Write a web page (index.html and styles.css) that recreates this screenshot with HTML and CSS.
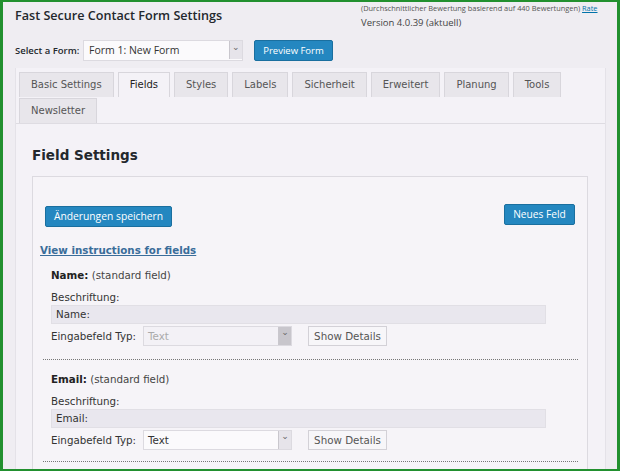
FILE: index.html
```html
<!DOCTYPE HTML>
<html>
<head>
<meta charset="utf-8" />
<title>Fast Secure Contact Form Settings</title>
<link rel="stylesheet" href="styles.css">
</head>
<body>
<div class="frame">
	<div class="head">
		<h1 class="title">Fast Secure Contact Form Settings</h1>
		<div class="rating">
			<p class="votes">(Durchschnittlicher Bewertung basierend auf 440 Bewertungen) <a href="#">Rate</a></p>
			<p class="version">Version 4.0.39 (aktuell)</p>
		</div>
	</div>

	<div class="pick">
		<label>Select a Form:</label>
		<div class="select wide"><span>Form 1: New Form</span><i>&#8964;</i></div>
		<a class="btn" href="#">Preview Form</a>
	</div>

	<div class="panel">
		<ul class="tabs">
			<li>Basic Settings</li>
			<li class="on">Fields</li>
			<li>Styles</li>
			<li>Labels</li>
			<li>Sicherheit</li>
			<li>Erweitert</li>
			<li>Planung</li>
			<li>Tools</li>
			<li>Newsletter</li>
		</ul>
		<div class="body">
			<h2>Field Settings</h2>
			<div class="box">
				<div class="actions">
					<a class="btn save" href="#">Änderungen speichern</a>
					<a class="btn add" href="#">Neues Feld</a>
				</div>
				<a class="help" href="#">View instructions for fields</a>

				<div class="field">
					<p class="name"><b>Name:</b> (standard field)</p>
					<p class="lbl">Beschriftung:</p>
					<div class="input">Name:</div>
					<div class="type">
						<span>Eingabefeld Typ:</span>
						<div class="select off"><span>Text</span><i>&#8964;</i></div>
						<a class="plain" href="#">Show Details</a>
					</div>
				</div>

				<div class="field">
					<p class="name"><b>Email:</b> (standard field)</p>
					<p class="lbl">Beschriftung:</p>
					<div class="input">Email:</div>
					<div class="type">
						<span>Eingabefeld Typ:</span>
						<div class="select"><span>Text</span><i>&#8964;</i></div>
						<a class="plain" href="#">Show Details</a>
					</div>
				</div>
			</div>
		</div>
	</div>
</div>
</body>
</html>
```
FILE: styles.css
```css
body { margin: 0; background: #efedf2; font-family: "Open Sans", "DejaVu Sans", sans-serif; color: #333; }
p, h1, h2, ul { margin: 0; padding: 0; }
a { text-decoration: none; }

.frame {
	box-sizing: border-box;
	height: 471px;
	overflow: hidden;
	border: 3px solid #22902f;
	border-top-width: 2px;
	border-bottom-width: 2px;
	padding: 0 12px 0 12px;
}

.head { display: flex; height: 34px; }
	.title { width: 346px; font-size: 12.6px; font-weight: 600; color: #23282d; padding-top: 5px; }
	.rating { padding-top: 2px; }
		.votes { font-size: 7.4px; color: #555; line-height: 9px; white-space: nowrap; }
			.votes a { color: #0073aa; text-decoration: underline; }
		.version { font-size: 9.5px; color: #444; margin-top: 3px; }

.pick { display: flex; align-items: center; height: 24px; margin-top: 2px; }
	.pick label { font-size: 9.5px; font-weight: 600; color: #23282d; width: 68px; }

.select {
	box-sizing: border-box;
	display: flex;
	justify-content: space-between;
	align-items: center;
	height: 20px;
	width: 149px;
	background: #fbfafc;
	border: 1px solid #dcdae0;
	font-family: "DejaVu Sans", sans-serif;
	font-size: 10.3px;
	color: #333;
	padding-left: 4px;
}
	.select.wide { width: 160px; height: 21px; font-family: "Open Sans", sans-serif; font-size: 10.5px; padding-left: 5px; }
	.select i {
		box-sizing: border-box;
		width: 13px;
		height: 18px;
		border-left: 1px solid #c9c7cd;
		background: #e6e4ea;
		font-style: normal;
		font-size: 9px;
		line-height: 11px;
		text-align: center;
		color: #666;
	}
	.select.off { background: #f3f1f6; color: #aaa; }
		.select.off i { background: #c8c6cc; }

.btn {
	display: inline-block;
	box-sizing: border-box;
	background: #2487c0;
	color: #fff;
	border: 1px solid #1a6f9f;
	border-radius: 2px;
	font-size: 9.5px;
	height: 21px;
	line-height: 19px;
	padding: 0 8px;
	text-align: center;
	white-space: nowrap;
}
	.pick .btn { margin-left: 11px; width: 79px; }

.panel {
	margin-top: 6px;
	width: 589px;
	height: 420px;
	border-left: 1px solid #e4e2e8;
	border-right: 1px solid #e4e2e8;
	background: #f4f2f7;
}
.tabs { list-style: none; display: flex; flex-wrap: wrap; padding: 4px 0 0 3px; row-gap: 1px; }
	.tabs li {
		box-sizing: border-box;
		height: 25px;
		line-height: 24px;
		padding: 0 11px;
		margin-right: 4px;
		background: #e8e6eb;
		border: 1px solid #d8d6dc;
		border-bottom: 0;
		font-family: "DejaVu Sans", sans-serif;
		font-size: 10px;
		color: #555;
	}
	.tabs li.on { background: #f4f2f7; color: #222; }

.body { border-top: 1px solid #dedce2; padding: 23px 0 0 16px; }
	.body h2 { font-family: "DejaVu Sans", sans-serif; font-size: 13.5px; line-height: 16px; font-weight: bold; color: #23282d; height: 29px; }

.box {
	box-sizing: border-box;
	width: 556px;
	height: 300px;
	border: 1px solid #dcdae0;
	border-bottom: 0;
	background: #f6f4f8;
}
	.actions { display: flex; justify-content: space-between; padding: 0 12px; height: 67px; }
		.btn.save { margin-top: 29px; width: 127px; font-size: 10.3px; padding: 0; }
		.btn.add { margin-top: 27px; width: 71px; font-size: 10.2px; padding: 0; }

	.help {
		display: block;
		margin-left: 7px;
		font-family: "DejaVu Sans", sans-serif;
		font-size: 10.3px;
		line-height: 12px;
		font-weight: bold;
		color: #3a6d9a;
		text-decoration: underline;
		height: 25px;
	}

.field {
	margin-left: 10px;
	padding: 0 0 13px 8px;
	border-bottom: 1px dotted #777;
	width: 535px;
	box-sizing: border-box;
	font-family: "DejaVu Sans", sans-serif;
	font-size: 10.3px;
	color: #333;
	margin-bottom: 13px;
}
	.field + .field { padding-bottom: 11px; }
	.field .name { height: 22px; line-height: 12px; color: #444; }
		.field .name b { color: #222; }
	.field .lbl { height: 14px; line-height: 12px; }
	.field .input {
		width: 495px;
		height: 19px;
		box-sizing: border-box;
		background: #e9e7ee;
		border: 1px solid #e1dfe5;
		padding-left: 4px;
		line-height: 17px;
	}
	.type { display: flex; align-items: center; height: 20px; margin-top: 2px; }
		.type > span { width: 92px; }
		.plain {
			margin-left: 16px;
			box-sizing: border-box;
			width: 79px;
			height: 20px;
			line-height: 18px;
			text-align: center;
			background: #f7f6f9;
			border: 1px solid #d3d1d7;
			color: #555;
		}
```
